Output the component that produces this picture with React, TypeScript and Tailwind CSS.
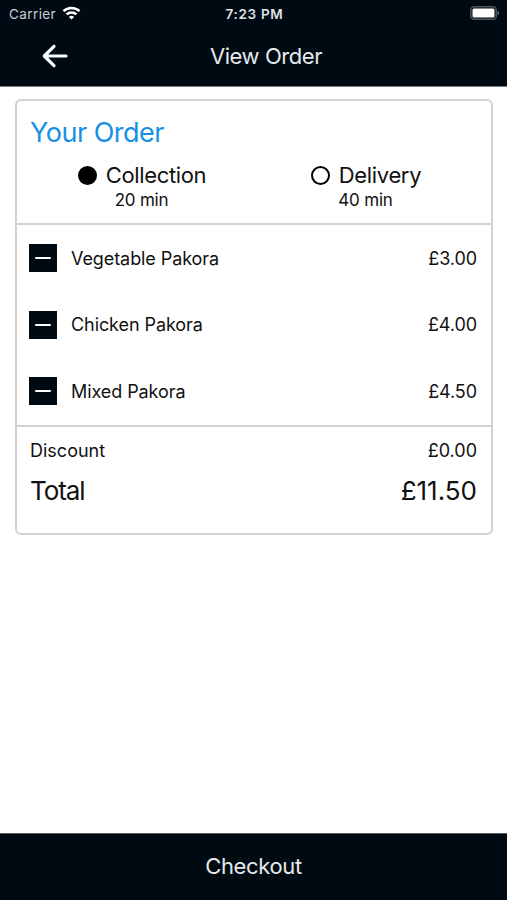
import { useState } from 'react'

type OrderItem = {
  id: number
  name: string
  price: number
}

type Method = 'collection' | 'delivery'

const initialItems: OrderItem[] = [
  { id: 1, name: 'Vegetable Pakora', price: 3 },
  { id: 2, name: 'Chicken Pakora', price: 4 },
  { id: 3, name: 'Mixed Pakora', price: 4.5 },
]

const formatPrice = (value: number) => `£${value.toFixed(2)}`

function StatusBar() {
  return (
    <div className="grid h-7 grid-cols-3 items-center pl-[9px] pr-[7px] text-[13.5px]">
      <div className="flex items-center gap-[6px]">
        <span className="tracking-[0.4px] text-[#c9ced2]">Carrier</span>
        <svg className="-mt-[2px]" width="19" height="14" viewBox="0 0 18 14" fill="none" stroke="#fff" strokeWidth="2.5">
          <path d="M1 5.2C5.4 0.8 12.6 0.8 17 5.2" />
          <path d="M4.1 8.4C6.8 5.7 11.2 5.7 13.9 8.4" />
          <path d="M9 13.6L6.4 10.9C7.8 9.5 10.2 9.5 11.6 10.9Z" fill="#fff" stroke="none" />
        </svg>
      </div>
      <span className="text-center font-semibold tracking-[0.7px] text-[#dfe2e5]">7:23 PM</span>
      <svg className="-mt-[2px] justify-self-end" width="30" height="14" viewBox="0 0 30 14">
        <rect x="0.75" y="0.75" width="25.5" height="12.5" rx="3.5" fill="none" stroke="#50575c" strokeWidth="1.5" />
        <rect x="2.5" y="2.5" width="22" height="9" rx="1.5" fill="#fff" />
        <path d="M27.5 4.8C29.6 5.4 29.6 8.6 27.5 9.2Z" fill="#62686d" />
      </svg>
    </div>
  )
}

type MethodOptionProps = {
  label: string
  time: string
  selected: boolean
  onSelect: () => void
}

function MethodOption({ label, time, selected, onSelect }: MethodOptionProps) {
  return (
    <button onClick={onSelect} className="flex flex-1 flex-col items-center">
      <span className="flex h-[26px] items-center gap-[9px]">
        <span
          className={
            selected
              ? 'size-[19px] rounded-full border-2 border-black bg-black'
              : 'size-[19px] rounded-full border-2 border-black'
          }
        />
        <span className="text-[22px] leading-[26px] tracking-[-0.35px]">{label}</span>
      </span>
      <span className="mr-px text-[17px] leading-6 tracking-[-0.2px]">{time}</span>
    </button>
  )
}

export default function App() {
  const [items, setItems] = useState(initialItems)
  const [method, setMethod] = useState<Method>('collection')

  const discount = 0
  const total = items.reduce((sum, item) => sum + item.price, 0) - discount

  const removeItem = (id: number) => {
    setItems(items.filter(item => item.id !== id))
  }

  return (
    <div className="flex h-screen flex-col bg-white font-['Inter',sans-serif] text-[#111]">
      <header className="h-[87px] shrink-0 border-b border-[#77797d] bg-[#000a12] text-[#e6e9ec]">
        <StatusBar />
        <div className="grid h-14 grid-cols-[1fr_auto_1fr] items-center pl-[25px]">
          <button className="ml-[17px] justify-self-start" aria-label="Back">
            <svg
              width="26"
              height="24"
              viewBox="0 0 26 24"
              fill="none"
              stroke="#fff"
              strokeWidth="3.2"
              strokeLinecap="round"
              strokeLinejoin="round"
            >
              <path d="M24 12H2.5M12 2.3L2.3 12L12 21.7" />
            </svg>
          </button>
          <h1 className="text-[22px] tracking-[-0.45px]">View Order</h1>
        </div>
      </header>

      <main className="flex-1 pl-[15px] pr-[14px] pt-3">
        <div className="rounded-md border-2 border-[#d2d2d2]">
          <div className="h-[124px] border-b-2 border-[#d2d2d2] px-[13px] pt-[14px]">
            <h2 className="text-[27px] leading-9 tracking-[-0.5px] text-[#1690e6]">Your Order</h2>
            <div className="mt-[11px] flex">
              <MethodOption
                label="Collection"
                time="20 min"
                selected={method === 'collection'}
                onSelect={() => setMethod('collection')}
              />
              <MethodOption
                label="Delivery"
                time="40 min"
                selected={method === 'delivery'}
                onSelect={() => setMethod('delivery')}
              />
            </div>
          </div>

          <ul className="border-b-2 border-[#d2d2d2] text-[18px] tracking-[-0.08px]">
            {items.map(item => (
              <li key={item.id} className="flex h-[66.5px] items-center pl-3 pr-[14px]">
                <button
                  onClick={() => removeItem(item.id)}
                  className="flex size-7 items-center justify-center bg-[#000a12]"
                  aria-label={`Remove ${item.name}`}
                >
                  <span className="h-[2px] w-4 rounded-[1px] bg-white" />
                </button>
                <span className="ml-[14px] flex-1">{item.name}</span>
                <span>{formatPrice(item.price)}</span>
              </li>
            ))}
          </ul>

          <div className="h-[106px] pl-[13px] pr-[14px] pt-[10px]">
            <div className="flex justify-between text-[18px] leading-7">
              <span>Discount</span>
              <span>{formatPrice(discount)}</span>
            </div>
            <div className="mt-2 flex justify-between text-[26px] leading-9">
              <span className="tracking-[-1.1px]">Total</span>
              <span>{formatPrice(total)}</span>
            </div>
          </div>
        </div>
      </main>

      <button className="h-[67px] shrink-0 border-t border-[#5d6266] bg-[#000a12] pb-[2px] text-[22px] tracking-[-0.35px] text-[#e6e9ec]">
        Checkout
      </button>
    </div>
  )
}
